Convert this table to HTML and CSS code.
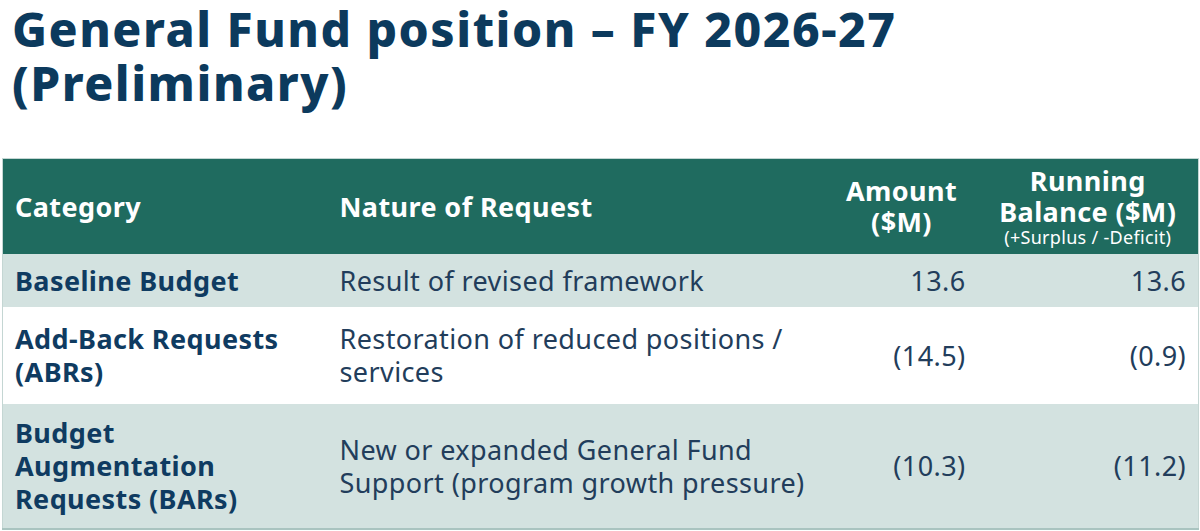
FILE: index.html
```html
<!DOCTYPE html>
<html lang="en">
<head>
<meta charset="utf-8">
<title>General Fund position – FY 2026-27 (Preliminary)</title>
<link rel="stylesheet" href="styles.css">
</head>
<body>
<main class="page">
  <h1 class="title">General Fund position – FY 2026-27<br>(Preliminary)</h1>
  <table class="fund-table">
    <colgroup>
      <col class="col-cat">
      <col class="col-nature">
      <col class="col-amount">
      <col class="col-balance">
    </colgroup>
    <thead>
      <tr class="head-row">
        <th class="th-left">Category</th>
        <th class="th-left">Nature of Request</th>
        <th class="th-num">Amount<br>($M)</th>
        <th class="th-num">Running<br>Balance ($M)<span class="th-sub">(+Surplus / -Deficit)</span></th>
      </tr>
    </thead>
    <tbody>
      <tr class="row row-shaded row-baseline">
        <td class="cat">Baseline Budget</td>
        <td class="nature">Result of revised framework</td>
        <td class="num">13.6</td>
        <td class="num">13.6</td>
      </tr>
      <tr class="row row-plain row-abr">
        <td class="cat">Add-Back Requests (ABRs)</td>
        <td class="nature">Restoration of reduced positions / services</td>
        <td class="num">(14.5)</td>
        <td class="num">(0.9)</td>
      </tr>
      <tr class="row row-shaded row-bar">
        <td class="cat">Budget Augmentation Requests (BARs)</td>
        <td class="nature">New or expanded General Fund Support (program growth pressure)</td>
        <td class="num">(10.3)</td>
        <td class="num">(11.2)</td>
      </tr>
    </tbody>
  </table>
</main>
</body>
</html>
```

FILE: styles.css
```css
html, body {
  margin: 0;
  padding: 0;
  background: #ffffff;
}

body {
  font-family: "Noto Sans", "Open Sans", sans-serif;
  color: #1d3a5a;
}

.page {
  padding: 2px 2px 0 2px;
}

.title {
  margin: 0 0 48px 10px;
  font-size: 48px;
  line-height: 54px;
  font-weight: 800;
  color: #0c3a5d;
  letter-spacing: 1.5px;
}

.fund-table {
  width: 1196px;
  border-collapse: collapse;
  table-layout: fixed;
  border: 1px solid #c4d6d3;
}

.col-cat { width: 325px; }
.col-nature { width: 498px; }
.col-amount { width: 152px; }
.col-balance { width: 221px; }

.head-row {
  background: #1f6b5f;
  height: 95px;
}

.head-row th {
  color: #ffffff;
  font-weight: 700;
  font-size: 27px;
  line-height: 31px;
  letter-spacing: 0.4px;
  padding: 4px 12px;
  vertical-align: middle;
}

.th-left {
  text-align: left;
}

.th-num {
  text-align: center;
}

.th-sub {
  display: block;
  font-size: 18px;
  line-height: 20px;
  font-weight: 400;
  letter-spacing: 0.3px;
}

.row td {
  font-size: 27px;
  line-height: 33px;
  letter-spacing: 0.4px;
  padding: 8px 12px;
  vertical-align: middle;
}

.row-shaded {
  background: #d3e2e0;
}

.row-plain {
  background: #ffffff;
}

.row-baseline { height: 53px; }
.row-abr { height: 97px; }
.row-bar { height: 125px; }

.row-bar td {
  border-bottom: 2px solid #a9c4c0;
}

.cat {
  font-weight: 700;
  color: #0f3b61;
}

.nature {
  color: #223d5b;
}

.num {
  text-align: right;
  color: #223d5b;
}
```
